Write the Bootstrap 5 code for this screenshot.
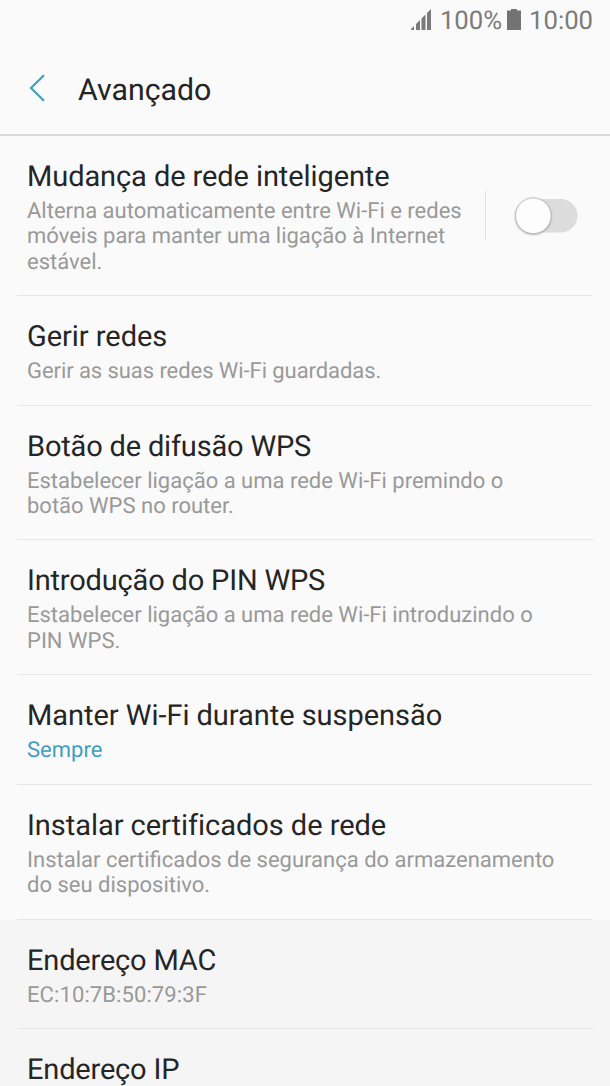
<!DOCTYPE html>
<html lang="pt">
<head>
<meta charset="utf-8">
<meta name="viewport" content="width=device-width, initial-scale=1">
<title>Avançado</title>
<link rel="stylesheet" href="https://cdn.jsdelivr.net/npm/bootstrap@5.3.0/dist/css/bootstrap.min.css">
<style>
body{font-family:Roboto,"Liberation Sans",sans-serif;background:#fafafa;color:#252525;height:1086px;overflow:hidden;text-rendering:geometricPrecision}
.status{height:41px;padding-right:17px;color:#7b7b7b;font-size:25.7px;line-height:40px}
.status span{padding-top:1px}
.signal{margin:-2px 9px 0 0}
.battery{margin:-2px 8px 0 5px}
.topbar{height:95px;border-bottom:2px solid #d9d9d9;padding:0 29px}
.topbar h1{font-size:30.3px;line-height:36px;margin:7px 0 0 33px}
.topbar svg{margin-top:1px}
.entry{padding:23px 10px 19.98px;margin:0 17px;border-bottom:1px solid #e6e6e6}
.entry.smart{padding-bottom:19.75px;padding-right:15px}
.entry h2{font-size:29px;line-height:36px;margin:0 0 4px;letter-spacing:-.04px}
.smart h2{letter-spacing:-.09px}
.entry h2.snug{letter-spacing:-.18px}
.entry p{font-size:22px;line-height:25.4px;margin:0 0 .1px;color:#999}
.entry p.snug{letter-spacing:-.07px}
.entry p.address{letter-spacing:.1px}
.entry p.accent{color:#419fbe}
.info{background:#f5f5f5;height:200px}
.divider{width:1.5px;height:49px;background:#dfdfdf;margin-right:28px}
.entry.smart .divider,.entry.smart svg{margin-top:-3px}
</style>
</head>
<body>
<div class="status d-flex justify-content-end align-items-center">
<svg class="signal" width="20" height="21" viewBox="0 0 20 21" fill="#7b7b7b"><path d="M0 21v-1l3-3v4zM5 21v-6l4-4v10zM10.500 21V9.500l4-4V21zM16 21V4l4-4v21z"/></svg>
<span>100%</span>
<svg class="battery" width="14" height="21" viewBox="0 0 14 21" fill="#737373"><path d="M4 0h6v1.500h4V21H0V1.500h4z"/></svg>
<span>10:00</span>
</div>
<header class="topbar d-flex align-items-center">
<svg width="16" height="28" viewBox="0 0 16 28" fill="none" stroke="#419fbe" stroke-width="2.200"><path d="M15 1.200L2 14l13 12.800"/></svg>
<h1 class="fw-normal">Avançado</h1>
</header>
<main>
<section class="entry smart d-flex align-items-center">
<div class="flex-grow-1"><h2 class="fw-normal">Mudança de rede inteligente</h2><p>Alterna automaticamente entre Wi-Fi e redes<br>móveis para manter uma ligação à Internet<br>estável.</p></div>
<div class="divider flex-shrink-0"></div>
<svg class="flex-shrink-0" width="64" height="40" viewBox="0 0 64 40" role="switch" aria-checked="false" aria-label="Mudança de rede inteligente">
<defs><filter id="shade" x="-20%" y="-20%" width="140%" height="150%"><feGaussianBlur stdDeviation="1"/></filter></defs>
<rect x="4" y="3" width="59.500" height="33.500" rx="16.750" fill="#dcdcdc"/>
<circle cx="19.300" cy="20.600" r="18" fill="#999" filter="url(#shade)"/>
<circle cx="19.300" cy="19.800" r="17.800" fill="#fdfdfd" stroke="#b8b8b8" stroke-width=".8"/>
</svg>
</section>
<section class="entry"><h2 class="fw-normal">Gerir redes</h2><p class="snug">Gerir as suas redes Wi-Fi guardadas.</p></section>
<section class="entry"><h2 class="fw-normal snug">Botão de difusão WPS</h2><p>Estabelecer ligação a uma rede Wi-Fi premindo o<br>botão WPS no router.</p></section>
<section class="entry"><h2 class="fw-normal snug">Introdução do PIN WPS</h2><p>Estabelecer ligação a uma rede Wi-Fi introduzindo o<br>PIN WPS.</p></section>
<section class="entry"><h2 class="fw-normal">Manter Wi-Fi durante suspensão</h2><p class="accent">Sempre</p></section>
<section class="entry"><h2 class="fw-normal">Instalar certificados de rede</h2><p>Instalar certificados de segurança do armazenamento<br>do seu dispositivo.</p></section>
<div class="info">
<section class="entry"><h2 class="fw-normal snug">Endereço MAC</h2><p class="address">EC:10:7B:50:79:3F</p></section>
<section class="entry"><h2 class="fw-normal snug">Endereço IP</h2></section>
</div>
</main>
<script src="https://cdn.jsdelivr.net/npm/bootstrap@5.3.0/dist/js/bootstrap.bundle.min.js"></script>
</body>
</html>
